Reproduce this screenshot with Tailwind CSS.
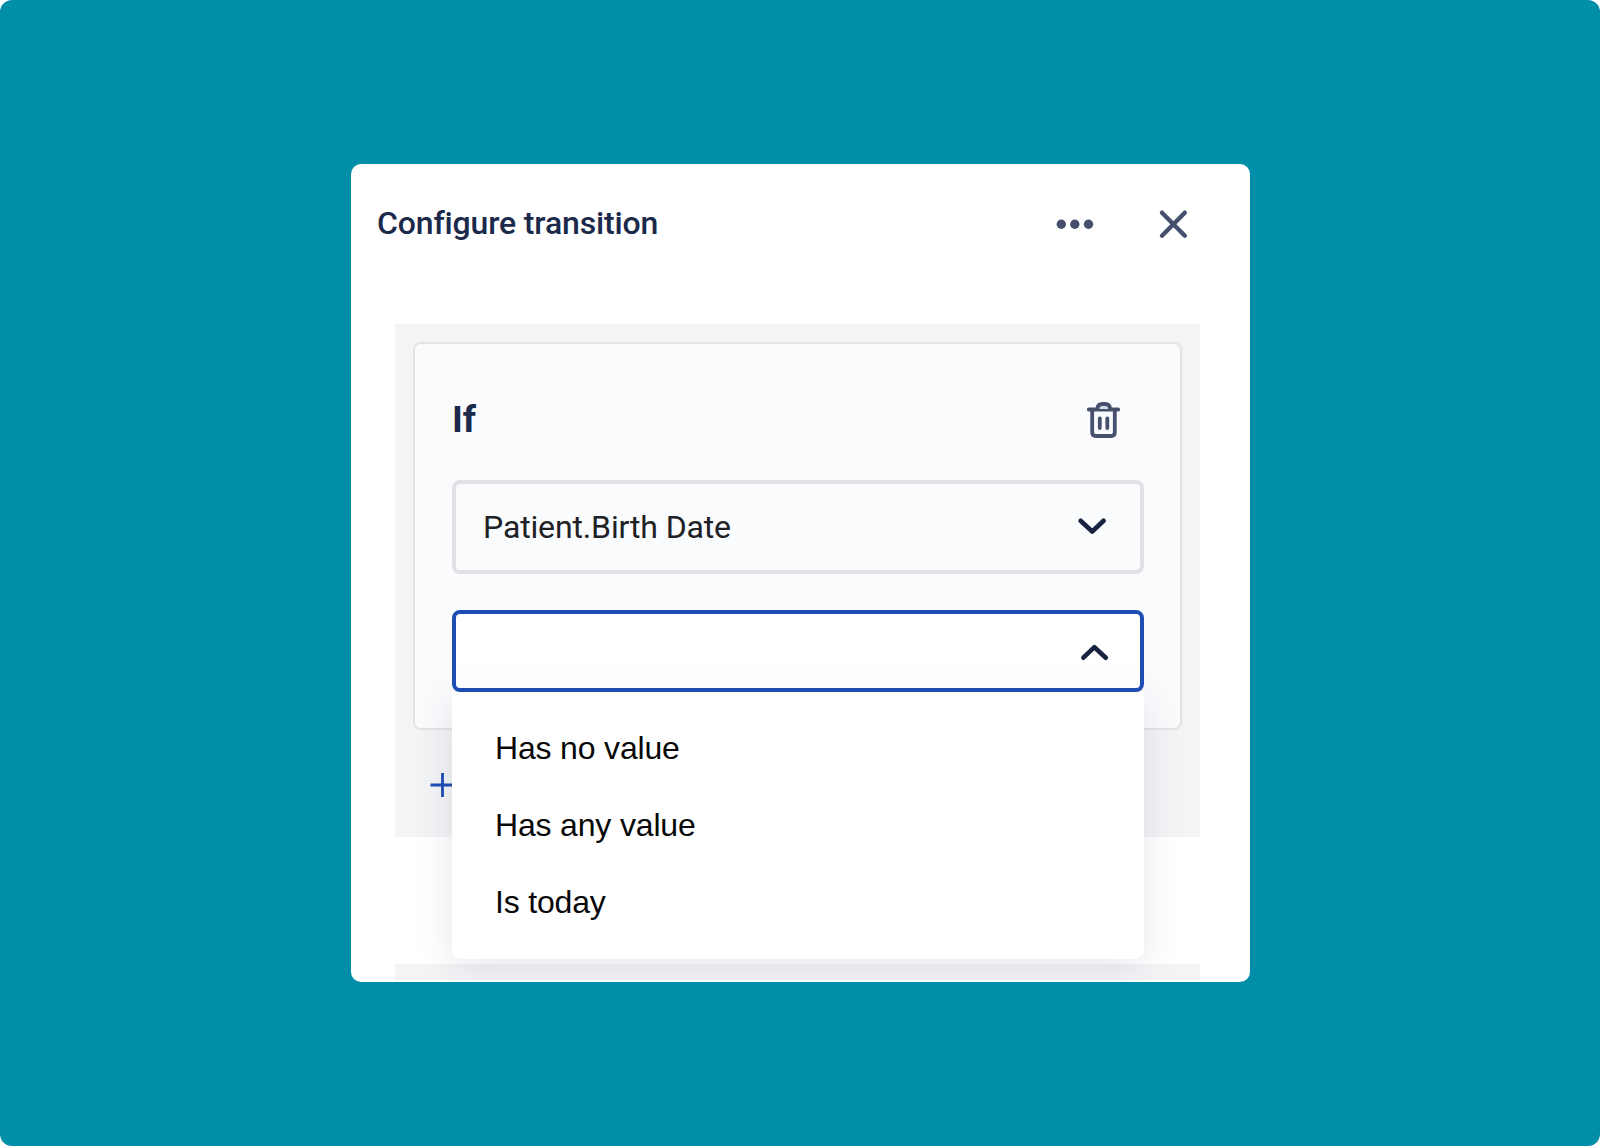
<!DOCTYPE html>
<html lang="en">
<head>
<meta charset="utf-8">
<title>Configure transition</title>
<script src="https://cdn.jsdelivr.net/npm/@tailwindcss/browser@4"></script>
</head>
<body class="bg-white">
<main class="flex h-[1146px] w-[1600px] items-start justify-center overflow-hidden rounded-[12px] bg-[#008ea8] pt-[164px] pl-px">
  <section class="flex h-[818px] w-[899px] flex-col overflow-hidden rounded-[10px] bg-white font-['Roboto',sans-serif]">
    <header class="flex h-40 shrink-0 items-start justify-between pt-[39px] pr-[60px] pl-[26px]">
      <h1 class="text-[32px] leading-10 font-medium tracking-[-0.15px] whitespace-nowrap text-[#1b294b]">Configure transition</h1>
      <div class="flex gap-[64px]">
        <svg class="h-10 w-10" viewBox="0 0 40 40" fill="#46506d"><circle cx="7.3" cy="21.2" r="4.7"/><circle cx="20.8" cy="21.2" r="4.7"/><circle cx="34.5" cy="21.2" r="4.7"/></svg>
        <svg class="h-10 w-[32px]" viewBox="0 0 32 40" fill="none" stroke="#46506d" stroke-width="4.4" stroke-linecap="round"><path d="M4 9.7 26.8 32.7M26.8 9.7 4 32.7"/></svg>
      </div>
    </header>
    <div class="mr-[50px] ml-[44px] h-[513px] shrink-0 bg-[#f3f4f6] px-[18px] pt-[18px]">
      <div class="h-[388px] rounded-lg border-2 border-[#e2e3e5] bg-[#fafbfd] pt-[54px] pr-[36px] pl-[37px]">
        <div class="flex h-[82px] items-start justify-between pr-[20px]">
          <h2 class="text-[37px] leading-[44px] font-bold text-[#1b294b]">If</h2>
          <svg class="mt-[2px] h-[40px] w-[40px]" viewBox="0 0 40 40" fill="none" stroke="#46506d" stroke-width="3.8" stroke-linecap="round" stroke-linejoin="round"><path d="M4.8 9.5H34.2M8.2 9.5V32.2Q8.2 36 12 36H27Q30.8 36 30.8 32.2V9.5"/><path d="M13.5 9Q13.5 4 18.5 4H21Q26 4 26 9" fill="#d7dae9"/><path d="M15.8 18.5V28M23.3 18.5V28"/></svg>
        </div>
        <div class="flex h-[94px] items-center justify-between rounded-lg border-4 border-[#dfe1e4] pr-[30px] pl-[27px]">
          <span class="text-[32px] leading-10 tracking-[-0.14px] whitespace-nowrap text-[#202124]">Patient.Birth Date</span>
          <svg class="h-[40px] w-[40px]" viewBox="0 0 40 40" fill="none" stroke="#17233f" stroke-width="4.6" stroke-linecap="round" stroke-linejoin="round"><path d="M10.6 13.8 22.2 24.5 33.6 13.8"/></svg>
        </div>
        <div class="relative mt-9 h-[82px]">
          <div class="relative z-10 flex h-full items-center justify-end rounded-lg border-4 border-[#1e4db3] bg-linear-to-b from-white from-60% to-[#fcfcfe] pr-[28px]">
            <svg class="h-[40px] w-[40px]" viewBox="0 0 40 40" fill="none" stroke="#17233f" stroke-width="4.6" stroke-linecap="round" stroke-linejoin="round"><path d="M11.4 26.7 22.4 16.2 33.8 26.7"/></svg>
          </div>
          <ul class="absolute top-full left-0 h-[267px] w-full rounded-b-[10px] bg-white pt-[18px] pl-[43px] font-['Liberation_Sans',sans-serif] text-[32px] leading-[77px] tracking-[-0.17px] text-[#080808] shadow-[0_8px_40px_rgba(20,20,60,0.10)]">
            <li>Has no value</li>
            <li>Has any value</li>
            <li>Is today</li>
          </ul>
        </div>
      </div>
      <svg class="mt-[41px] ml-[17px] h-[28px] w-[26px]" viewBox="0 0 26 28" fill="none" stroke="#1e4db3" stroke-width="2.8"><path d="M.5 14H25M12.5 2V26"/></svg>
    </div>
    <div class="mt-[127px] mr-[50px] ml-[44px] h-4 shrink-0 bg-[#f3f4f6]"></div>
  </section>
</main>
</body>
</html>
